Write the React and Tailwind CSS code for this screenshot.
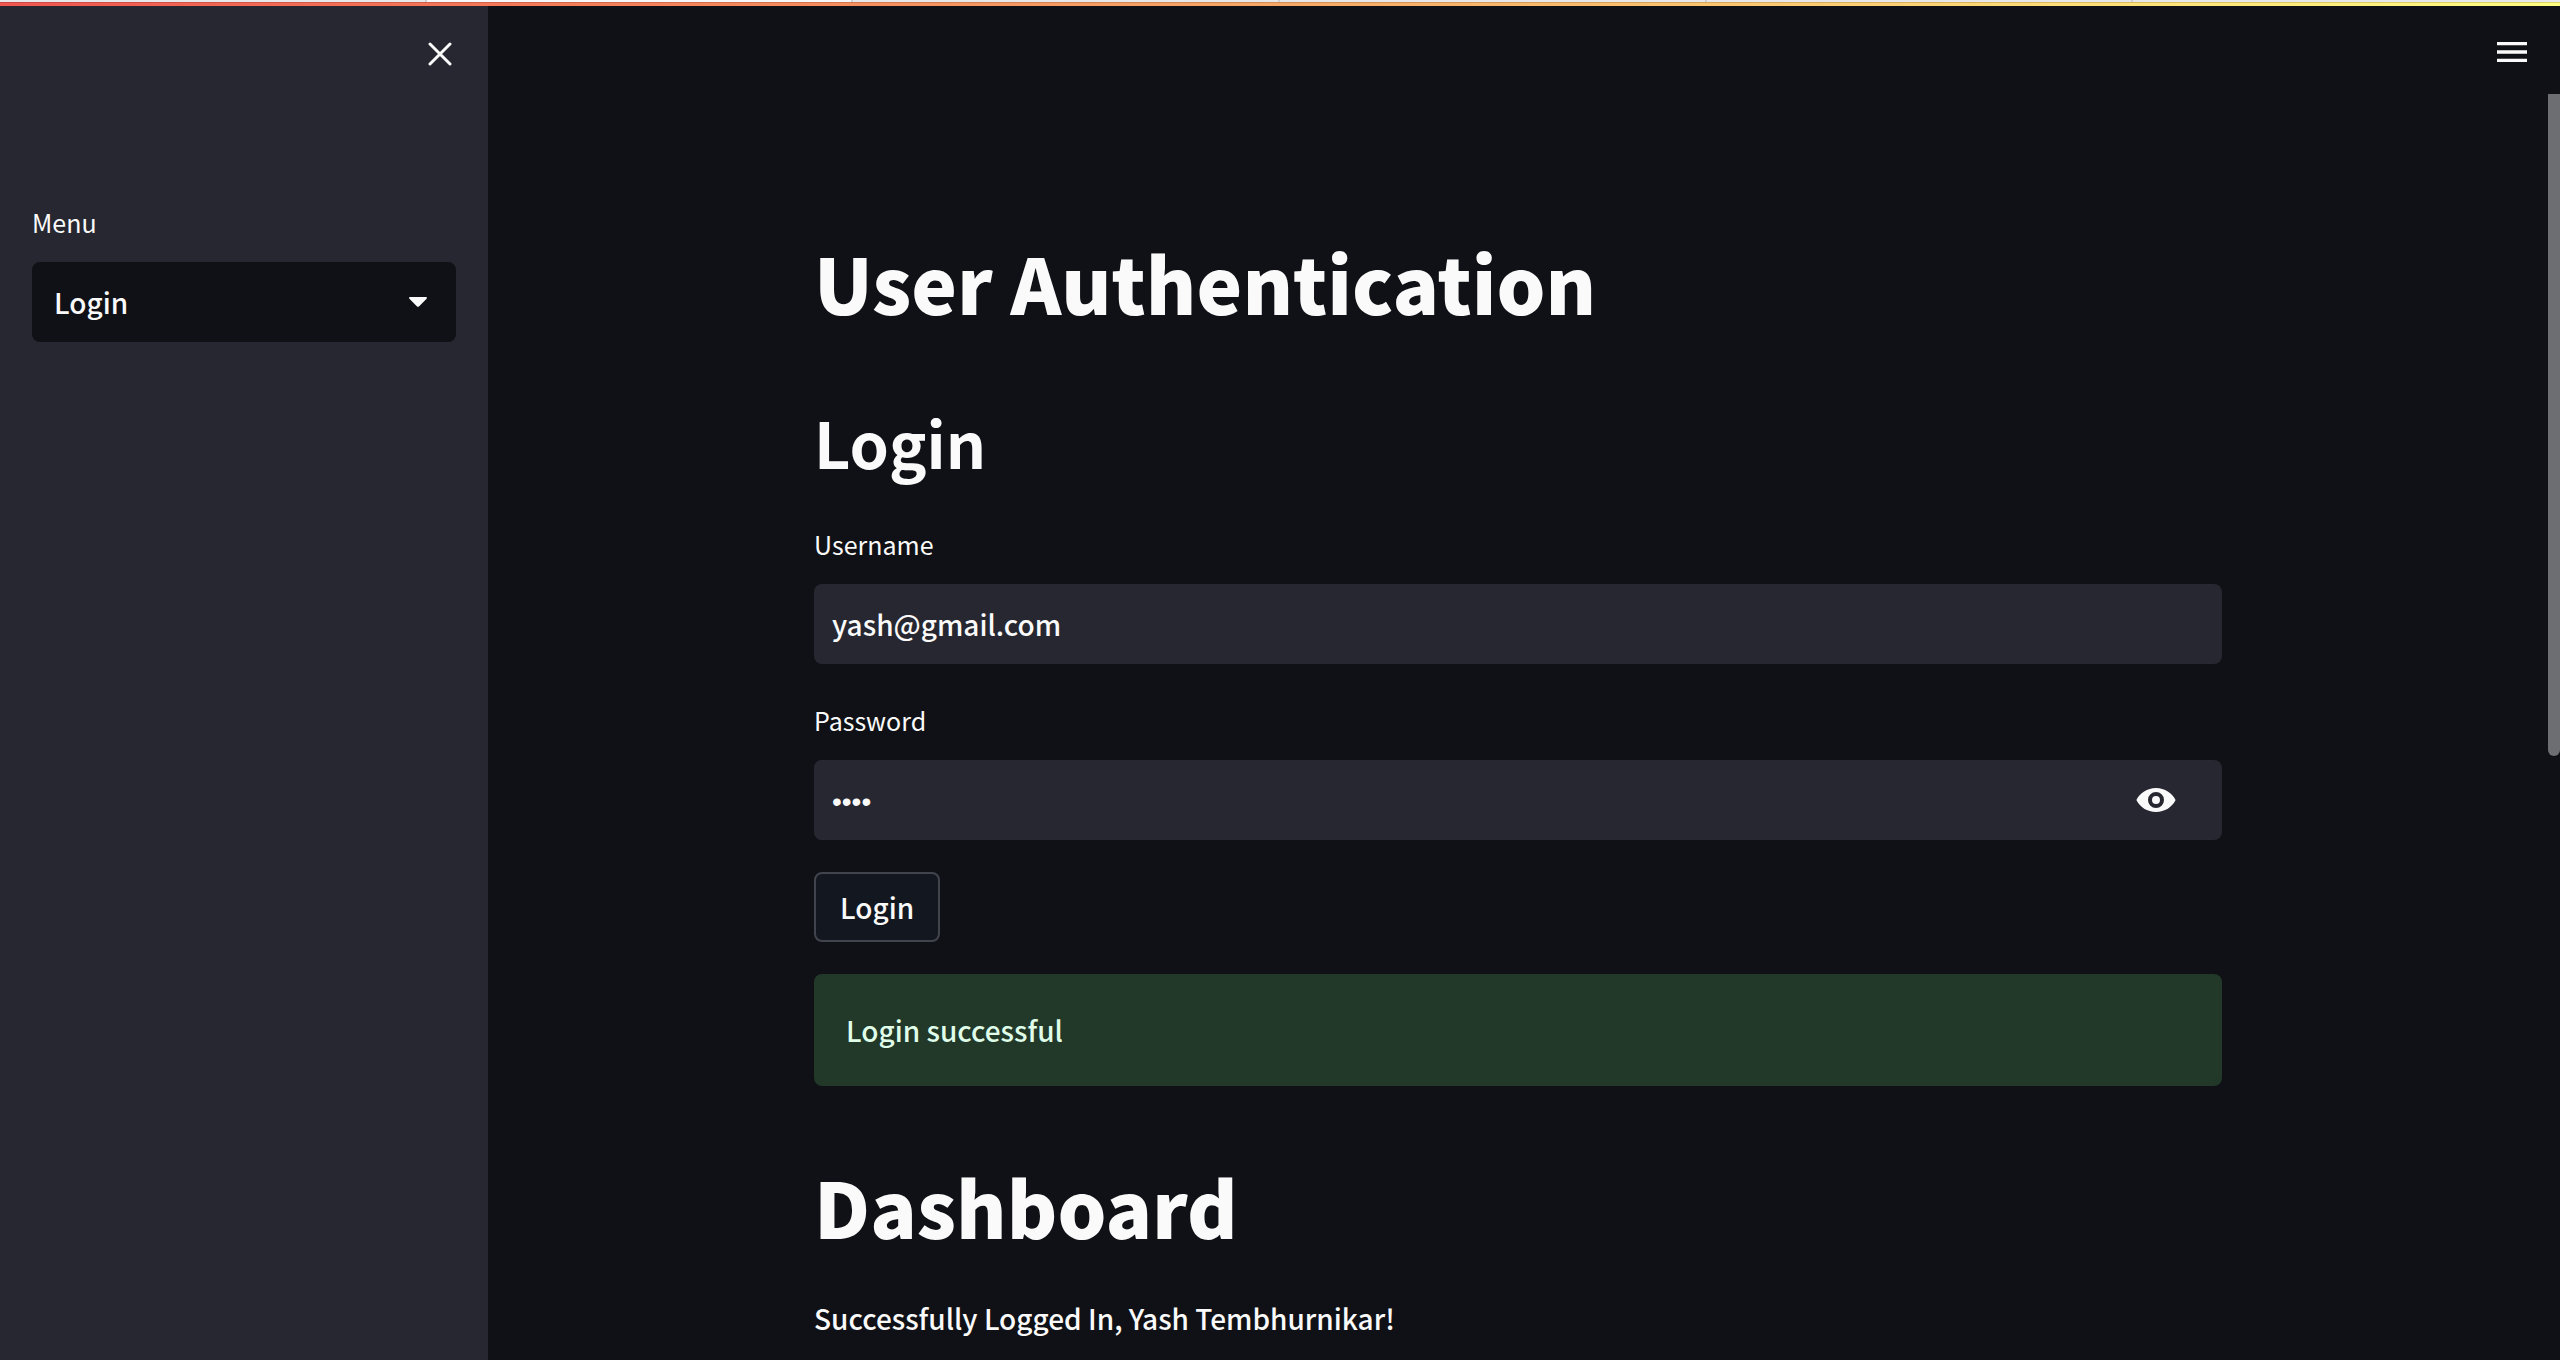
import { useState } from "react";

function CloseIcon() {
  return (
    <svg viewBox="0 0 24 24" className="size-6" fill="none" stroke="currentColor" strokeWidth="3" strokeLinecap="round" aria-hidden="true">
      <path d="M2 2l20 20M22 2L2 22" />
    </svg>
  );
}

function MenuIcon() {
  return (
    <svg viewBox="0 0 30 20" className="h-5 w-[30px]" fill="currentColor" aria-hidden="true">
      <path d="M0 0h30v3.33H0zM0 8.33h30v3.34H0zM0 16.67h30V20H0z" />
    </svg>
  );
}

function EyeIcon() {
  return (
    <svg viewBox="0 0 8 8" className="size-10" fill="currentColor" aria-hidden="true">
      <path
        fillRule="evenodd"
        d="M4 1.6C2.25 1.6.74 2.6.08 4 .74 5.4 2.25 6.4 4 6.4S7.26 5.4 7.92 4C7.26 2.6 5.75 1.6 4 1.6zM4 5.6a1.6 1.6 0 1 1 0-3.2 1.6 1.6 0 0 1 0 3.2zm0-2.4a.8.8 0 1 0 0 1.6.8.8 0 0 0 0-1.6z"
      />
    </svg>
  );
}

function Caret() {
  return (
    <svg viewBox="0 0 18 10" className="h-[10px] w-[18px]" fill="currentColor" aria-hidden="true">
      <path d="M1.2 0h15.6c1 0 1.5 1 .8 1.7L10.2 9.2a1.7 1.7 0 0 1-2.4 0L.4 1.7C-.3 1 .2 0 1.2 0z" />
    </svg>
  );
}

const field = "h-20 w-full rounded-lg bg-[#262730] px-[18px] text-[28px] text-[#fafafa] outline-none";
const label = "mb-6 block text-[25px] leading-8 font-normal";

export default function App() {
  const [visible, setVisible] = useState(false);
  return (
    <div className="flex h-screen flex-col overflow-hidden bg-[#101116] font-['Noto_Sans_CJK_SC',sans-serif] font-medium text-[#fafafa]">
      <div className="grid h-[2px] shrink-0 grid-cols-6 divide-x-2 divide-[#d0d0d0] bg-[#e8e8ea]">
        <span />
        <span className="bg-[#f8f8fa]" />
        <span />
        <span />
        <span />
        <span />
      </div>
      <div className="h-1 shrink-0 border-t border-black/15 bg-linear-to-r from-[#f0554f] via-[#f6a765] to-[#fffd80]" />
      <div className="flex min-h-0 flex-1">
        <aside className="flex w-[488px] shrink-0 flex-col bg-[#262730] px-8">
          <button type="button" aria-label="Close sidebar" className="mt-9 mr-1 self-end">
            <CloseIcon />
          </button>
          <div className="mt-[140px]">
            <label htmlFor="menu" className={label}>
              Menu
            </label>
            <div className="grid items-center">
              <select
                id="menu"
                className="col-start-1 row-start-1 h-20 w-full appearance-none rounded-lg bg-[#101116] px-[22px] text-[28px] outline-none"
              >
                <option>Login</option>
                <option>SignUp</option>
              </select>
              <span className="pointer-events-none col-start-1 row-start-1 mr-[29px] justify-self-end">
                <Caret />
              </span>
            </div>
          </div>
        </aside>
        <main className="min-w-0 flex-1 overflow-hidden">
          <div className="flex">
            <div className="flex-1 px-8">
              <div className="mx-auto flex max-w-[1408px] flex-col pt-[216px]">
                <h1 className="text-[77px] leading-[120px] font-black">User Authentication</h1>
                <h2 className="mt-10 text-[63px] leading-[120px] font-bold">Login</h2>
                <div className="mt-[26px]">
                  <label htmlFor="username" className={label}>
                    Username
                  </label>
                  <input id="username" type="text" defaultValue="yash@gmail.com" className={field} />
                </div>
                <div className="mt-10">
                  <label htmlFor="password" className={label}>
                    Password
                  </label>
                  <div className="flex rounded-lg bg-[#262730]">
                    <input
                      id="password"
                      type={visible ? "text" : "password"}
                      defaultValue="yash"
                      className={`${field} pt-1 font-['Liberation_Sans',sans-serif]`}
                    />
                    <button
                      type="button"
                      aria-label="Show password"
                      onClick={() => setVisible(!visible)}
                      className="mr-[46px] shrink-0"
                    >
                      <EyeIcon />
                    </button>
                  </div>
                </div>
                <button
                  type="button"
                  className="mt-8 h-[70px] self-start rounded-lg border-2 border-[#41444c] bg-[#131720] px-6 text-[28px] leading-8"
                >
                  Login
                </button>
                <p role="status" className="mt-8 rounded-lg bg-[#223829] p-8 text-[28px] leading-[48px] text-[#dffde9]">
                  Login successful
                </p>
                <h1 className="mt-[60px] text-[77px] leading-[120px] font-black">Dashboard</h1>
                <p className="mt-7 text-[28px] leading-[48px]">Successfully Logged In, Yash Tembhurnikar!</p>
              </div>
            </div>
            <div className="w-3 shrink-0 pt-[88px]">
              <div className="h-[662px] rounded-b-full bg-[#6d6e72]" />
            </div>
          </div>
        </main>
      </div>
      <button type="button" aria-label="Main menu" className="absolute top-[42px] right-[33px]">
        <MenuIcon />
      </button>
    </div>
  );
}
